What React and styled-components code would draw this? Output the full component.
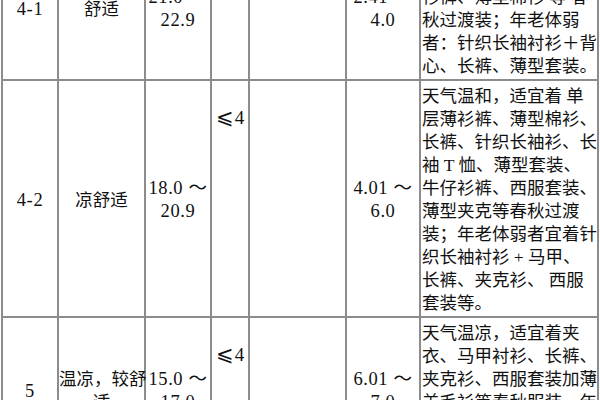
import React from "react";
import styled, { createGlobalStyle } from "styled-components";

const GlobalStyle = createGlobalStyle`
  html, body {
    margin: 0;
    padding: 0;
    background: #fff;
  }
`;

// 每一列的宽度（边框中线到中线）
const colWidths = [56, 87, 66, 38, 97, 74, 178];

const rows = [
  {
    level: "4-1",
    name: ["舒适"],
    temp: ["21.0 ～", "22.9"],
    wind: "4",
    index: ["2.41 ～", "4.0"],
    advice: [
      "天气温暖，适宜着单层",
      "长袖衬衫、休闲薄牛仔",
      "衫裤、薄型棉衫 等 春",
      "秋过渡装；年老体弱",
      "者：针织长袖衬衫＋背",
      "心、长裤、薄型套装。",
    ],
  },
  {
    level: "4-2",
    name: ["凉舒适"],
    temp: ["18.0 ～", "20.9"],
    wind: "4",
    index: ["4.01 ～", "6.0"],
    advice: [
      "天气温和，适宜着 单",
      "层薄衫裤、薄型棉衫、",
      "长裤、针织长袖衫、长",
      "袖 T 恤、薄型套装、",
      "牛仔衫裤、西服套装、",
      "薄型夹克等春秋过渡",
      "装；年老体弱者宜着针",
      "织长袖衬衫 + 马甲、",
      "长裤、夹克衫、 西服",
      "套装等。",
    ],
  },
  {
    level: "5",
    name: ["温凉，较舒", "适"],
    temp: ["15.0 ～", "17.0"],
    wind: "4",
    index: ["6.01 ～", "7.0"],
    advice: [
      "天气温凉，适宜着夹",
      "衣、马甲衬衫、长裤、",
      "夹克衫、西服套装加薄",
      "羊毛衫等春秋服装，年",
      "老体弱者宜着夹衣加",
      "羊毛衫等。",
    ],
  },
];

function App() {
  return (
    <>
      <GlobalStyle />
      <Page>
        <Table>
          <colgroup>
            {colWidths.map((w, i) => (
              <col key={i} style={{ width: w }} />
            ))}
          </colgroup>
          <tbody>
            {rows.map((row) => (
              <tr key={row.level}>
                <Cell $num>{row.level}</Cell>
                <Cell>
                  {row.name.map((t) => (
                    <Line key={t}>{t}</Line>
                  ))}
                </Cell>
                <Cell $num>
                  {row.temp.map((t) => (
                    <Line key={t}>{t}</Line>
                  ))}
                </Cell>
                <SignCell>
                  <Sign>⩽</Sign>
                  {row.wind}
                </SignCell>
                <Cell />
                <Cell $num>
                  {row.index.map((t) => (
                    <Line key={t}>{t}</Line>
                  ))}
                </Cell>
                <AdviceCell>
                  {row.advice.map((t, i) => (
                    <Line key={i}>{t}</Line>
                  ))}
                </AdviceCell>
              </tr>
            ))}
          </tbody>
        </Table>
      </Page>
    </>
  );
}

export default App;

const Page = styled.div`
  width: 600px;
  height: 400px;
  overflow: hidden;
  background: #fff;
`;

const Table = styled.table`
  width: 598px;
  margin: -66px 0 0 1px;
  border-collapse: collapse;
  table-layout: fixed;
  color: #111;
  font-family: "Liberation Serif", "Noto Sans CJK SC", serif;
  font-size: 17.5px;
  line-height: 23px;
`;

const Cell = styled.td`
  border: 2px solid #8c8c8c;
  padding: 4px 0 1px;
  text-align: center;
  vertical-align: middle;
  white-space: nowrap;
  font-size: ${(p) => (p.$num ? "18.5px" : "17.5px")};
  letter-spacing: ${(p) => (p.$num ? "0.6px" : "0")};
`;

const SignCell = styled(Cell)`
  vertical-align: top;
  padding-top: 25px;
  font-size: 19px;
`;

const Sign = styled.span`
  font-family: "DejaVu Sans", sans-serif;
  font-size: 21px;
  font-weight: 300;
  margin-right: 1px;
`;

const AdviceCell = styled(Cell)`
  text-align: left;
  vertical-align: top;
  padding-left: 1px;
`;

const Line = styled.span`
  display: block;
`;
